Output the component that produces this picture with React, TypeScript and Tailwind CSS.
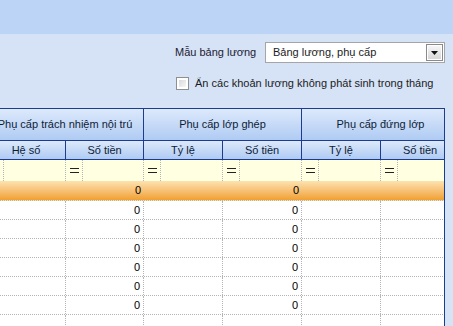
import React from "react";

const cols = [79, 78, 79, 79, 79, 79];
const dark = "border-[#1c3d8f]";

function HeaderGroup({ title, w }: { title: string; w: number }) {
  return (
    <div
      className={`h-[32px] shrink-0 flex items-center justify-center border-r border-b ${dark} bg-gradient-to-b from-[#dde9fb] to-[#afcbf3] text-[#0e1c36]`}
      style={{ width: w }}
    >
      <span className="whitespace-nowrap">{title}</span>
    </div>
  );
}

function SubHeader({ title, w }: { title: string; w: number }) {
  return (
    <div
      className={`h-[19px] shrink-0 flex items-center justify-center border-r border-b ${dark} bg-gradient-to-b from-[#dde9fb] to-[#afcbf3] text-[#0e1c36]`}
      style={{ width: w }}
    >
      <span className="whitespace-nowrap">{title}</span>
    </div>
  );
}

function FilterCell({ w }: { w: number }) {
  return (
    <div className="h-[21px] shrink-0 flex border-r border-dotted border-[#b4b4b4]" style={{ width: w }}>
      <div className="w-[17px] h-full flex items-center justify-center border-r border-dotted border-[#b4b4b4]">
        <span className="block w-[9px] h-[5px] border-t-[1.5px] border-b-[1.5px] border-[#222]" />
      </div>
      <div className="flex-1" />
    </div>
  );
}

function DataRow({ selected }: { selected?: boolean }) {
  return (
    <div
      className={`flex border-b border-dotted border-[#b4b4b4] ${
        selected ? "h-[20px] bg-gradient-to-b from-[#fde2ae] to-[#f0a02c]" : "h-[19px] bg-white"
      }`}
    >
      {cols.map((w, i) => (
        <div
          key={i}
          className={`shrink-0 h-full flex items-center justify-end pr-[3px] ${
            selected ? "" : "border-r border-dotted border-[#b4b4b4]"
          }`}
          style={{ width: w }}
        >
          {(i === 1 || i === 3) && <span className="text-black">0</span>}
        </div>
      ))}
    </div>
  );
}

export default function App() {
  return (
    <div className="w-[453px] h-[326px] overflow-hidden bg-[#d6e3f7] font-['Liberation_Sans',sans-serif] text-[11px] leading-none text-[#1b1b1b]">
      <div className="h-[34px] bg-[#bcd4f6]" />
      <div className="ml-[175px] w-[270px] pt-[8px] flex flex-col">
        <div className="flex items-center h-[21px]">
          <span className="w-[90px] shrink-0 text-[#1c2030]">Mẫu bảng lương</span>
          <div className="flex-1 h-[21px] bg-white border border-[#a5a5a5] flex items-center justify-between pl-[7px] pr-[1px]">
            <span>Bảng lương, phụ cấp</span>
            <div className="w-[17px] h-[17px] shrink-0 border border-[#8a8a8a] p-[1px] bg-white">
              <div className="w-full h-full bg-gradient-to-b from-[#f6f6f6] to-[#d7d7d7] flex items-center justify-center">
                <svg width="7" height="4" viewBox="0 0 7 4">
                  <path d="M0 0H7L3.5 4Z" fill="#111" />
                </svg>
              </div>
            </div>
          </div>
        </div>
        <div className="flex items-center mt-[14px] h-[13px]">
          <div className="w-[13px] h-[13px] shrink-0 border border-[#8e8f8f] bg-white p-[2px] ml-[1px]">
            <div className="w-full h-full bg-gradient-to-br from-[#d9d9d9] to-[#f7f7f7]" />
          </div>
          <span className="ml-[6px] whitespace-nowrap">Ẩn các khoản lương không phát sinh trong tháng</span>
        </div>
      </div>
      <div className={`mt-[18px] w-[445px] h-[300px] overflow-hidden border-t border-r ${dark} bg-white`}>
        <div className="ml-[-13px] w-[458px] overflow-hidden">
          <div className="flex">
            <HeaderGroup title="Phụ cấp trách nhiệm nội trú" w={157} />
            <HeaderGroup title="Phụ cấp lớp ghép" w={158} />
            <HeaderGroup title="Phụ cấp đứng lớp" w={158} />
          </div>
          <div className="flex">
            <SubHeader title="Hệ số" w={79} />
            <SubHeader title="Số tiền" w={78} />
            <SubHeader title="Tỷ lệ" w={79} />
            <SubHeader title="Số tiền" w={79} />
            <SubHeader title="Tỷ lệ" w={79} />
            <SubHeader title="Số tiền" w={79} />
          </div>
          <div className="flex bg-[#ffffe1]">
            {cols.map((w, i) => (
              <FilterCell key={i} w={w} />
            ))}
          </div>
          <DataRow selected />
          {Array.from({ length: 6 }).map((_, i) => (
            <DataRow key={i} />
          ))}
          <div className="flex h-[60px] bg-white">
            {cols.map((w, i) => (
              <div key={i} className="shrink-0 h-full border-r border-dotted border-[#b4b4b4]" style={{ width: w }} />
            ))}
          </div>
        </div>
      </div>
    </div>
  );
}
